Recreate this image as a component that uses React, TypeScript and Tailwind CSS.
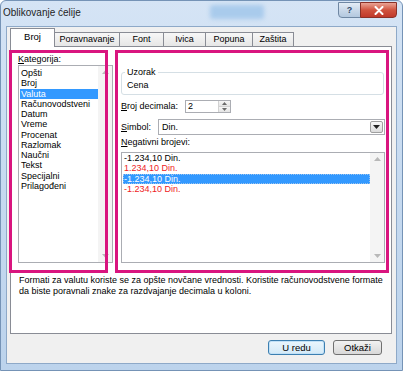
const categories = [
  "Opšti",
  "Broj",
  "Valuta",
  "Računovodstveni",
  "Datum",
  "Vreme",
  "Procenat",
  "Razlomak",
  "Naučni",
  "Tekst",
  "Specijalni",
  "Prilagođeni",
];

const negatives = [
  { text: "-1.234,10 Din.", red: false },
  { text: "1.234,10 Din.", red: true },
  { text: "-1.234,10 Din.", red: false, selected: true },
  { text: "-1.234,10 Din.", red: true },
];

const tabs = ["Broj", "Poravnavanje", "Font", "Ivica", "Popuna", "Zaštita"];
const tabWidths = ["w-[45px]", "w-[66px]", "w-[45px]", "w-[43px]", "w-[48px]", "w-[42px]"];

function Arrow({ up, className }: { up?: boolean; className?: string }) {
  return (
    <svg width="7" height="4" viewBox="0 0 7 4" className={className}>
      <path d={up ? "M0 4 L3.5 0 L7 4 Z" : "M0 0 L3.5 4 L7 0 Z"} fill="currentColor" />
    </svg>
  );
}

function ScrollTrack() {
  return (
    <div className="flex w-[14px] shrink-0 flex-col items-center justify-between bg-[#f4f4f4] py-[4px] text-[#b8b8b8]">
      <Arrow up />
      <Arrow />
    </div>
  );
}

export default function App() {
  return (
    <div className="relative h-[371px] w-[403px] overflow-hidden bg-white font-['Liberation_Sans',Arial,sans-serif] text-[9px] text-black">
      <div className="flex h-full flex-col rounded-t-[6px] border border-[#7593b6] bg-gradient-to-b from-[#d5e4f5] via-[#c6daf0] to-[#bcd3ec]">
        {/* title bar */}
        <div className="relative flex h-[25px] shrink-0 items-start">
          <div className="absolute top-[4px] left-[209px] h-[14px] w-[54px] rounded-[3px] bg-[#a9cbec] blur-[2px]" />
          <span className="relative mt-[5px] ml-[2px] text-[10px] leading-[14px] text-[#1e1e1e]">
            Oblikovanje ćelije
          </span>
          <div className="relative mt-[1px] mr-[5px] ml-auto flex">
            <div className="flex h-[16px] w-[23px] items-center justify-center rounded-bl-[4px] border border-[#6f87a3] bg-gradient-to-b from-[#e3ecf6] via-[#c9d8e9] to-[#b3c8df] text-[9px] leading-none font-bold text-[#2f4a69]">
              ?
            </div>
            <div className="-ml-px flex h-[16px] w-[37px] items-center justify-center rounded-br-[4px] border border-[#8b3128] bg-gradient-to-b from-[#e9a395] via-[#d0533f] to-[#c0392b]">
              <svg width="10" height="9" viewBox="0 0 10 9">
                <path d="M1.5 1 L8.5 8 M8.5 1 L1.5 8" stroke="#fff" strokeWidth="2" strokeLinecap="round" />
              </svg>
            </div>
          </div>
        </div>

        {/* client area */}
        <div className="mx-[5px] mb-[6px] flex flex-1 flex-col border border-[#8ea9c8] bg-[#f0f0f0] pr-[4px] pl-[3px]">
          {/* tabs */}
          <div className="flex h-[19px] items-end">
            {tabs.map((tab, i) =>
              i === 0 ? (
                <div
                  key={tab}
                  className={`relative z-10 -mb-px flex h-[19px] ${tabWidths[i]} items-center justify-center border-x border-t border-[#898c95] bg-white pb-[2px] text-[9.5px]`}
                >
                  {tab}
                </div>
              ) : (
                <div
                  key={tab}
                  className={`-ml-px flex h-[14px] ${tabWidths[i]} items-center justify-center border-x border-t border-[#898c95] bg-gradient-to-b from-[#f7f7f7] to-[#e6e6e6] text-[9px]`}
                >
                  {tab}
                </div>
              ),
            )}
          </div>

          {/* tab panel */}
          <div className="flex h-[288px] w-[382px] flex-col border border-[#898c95] bg-white pt-[7px] pl-[7px]">
            <div className="flex gap-[8px]">
              {/* left column */}
              <div className="flex w-[95px] flex-col">
                <div className="h-[11px] leading-[11px]">
                  <span className="underline">K</span>ategorija:
                </div>
                <div className="flex h-[198px] border border-[#abadb3] bg-white">
                  <div className="flex-1 pt-[2px]">
                    {categories.map((c) => (
                      <div
                        key={c}
                        className={`ml-px h-[10.27px] pl-[1px] leading-[10.27px] ${
                          c === "Valuta" ? "bg-[#3399ff] text-white" : ""
                        }`}
                      >
                        {c}
                      </div>
                    ))}
                  </div>
                  <ScrollTrack />
                </div>
              </div>

              {/* right column */}
              <div className="flex w-[264px] flex-col">
                <div className="relative mt-[18px] mr-[1px] h-[23px] rounded-[3px] border border-[#d5dfe5] pt-[7px] pl-[5px] leading-[11px]">
                  <span className="absolute -top-[6px] left-[3px] bg-white px-[2px] leading-[11px]">
                    Uzorak
                  </span>
                  Cena
                </div>

                <div className="mt-[5px] flex items-center">
                  <span className="w-[64px] leading-[11px]">
                    <span className="underline">B</span>roj decimala:
                  </span>
                  <div className="flex h-[13px] w-[46px] border border-[#abadb3] bg-white">
                    <span className="flex-1 pl-[2px] leading-[11px]">2</span>
                    <div className="flex w-[12px] flex-col border-l border-[#d2d2d2]">
                      <div className="flex flex-1 items-center justify-center bg-gradient-to-b from-[#f6f6f6] to-[#e4e4e4] text-[#6a6a6a]">
                        <svg width="5" height="3" viewBox="0 0 5 3">
                          <path d="M0 3 L2.5 0 L5 3 Z" fill="currentColor" />
                        </svg>
                      </div>
                      <div className="flex flex-1 items-center justify-center border-t border-[#d2d2d2] bg-gradient-to-b from-[#f6f6f6] to-[#e4e4e4] text-[#6a6a6a]">
                        <svg width="5" height="3" viewBox="0 0 5 3">
                          <path d="M0 0 L2.5 3 L5 0 Z" fill="currentColor" />
                        </svg>
                      </div>
                    </div>
                  </div>
                </div>

                <div className="mt-[6px] flex items-center">
                  <span className="w-[37px] leading-[11px]">
                    <span className="underline">S</span>imbol:
                  </span>
                  <div className="flex h-[16px] w-[227px] items-center border border-[#abadb3] bg-white">
                    <span className="flex-1 pl-[3px] leading-[11px]">Din.</span>
                    <div className="mr-px flex h-[12px] w-[13px] items-center justify-center rounded-[2px] border border-[#a0a0a0] bg-gradient-to-b from-[#f8f8f8] to-[#dcdcdc] text-[#222]">
                      <svg width="7" height="4" viewBox="0 0 7 4">
                        <path d="M0 0 L3.5 4 L7 0 Z" fill="currentColor" />
                      </svg>
                    </div>
                  </div>
                </div>

                <div className="mt-[2px] h-[11px] leading-[11px]">
                  <span className="underline">N</span>egativni brojevi:
                </div>
                <div className="mt-[4px] flex h-[111px] border border-[#abadb3] bg-white">
                  <div className="flex-1">
                    {negatives.map((n, i) => (
                      <div
                        key={i}
                        className={`ml-px h-[10.3px] pl-[1px] leading-[10.3px] ${
                          n.selected
                            ? "outline outline-1 -outline-offset-1 outline-dotted outline-[#9ac3ee] bg-[#3399ff] text-white"
                            : n.red
                              ? "text-[#ee1c25]"
                              : ""
                        }`}
                      >
                        {n.text}
                      </div>
                    ))}
                  </div>
                  <ScrollTrack />
                </div>
              </div>
            </div>

            <p className="mt-[12px] pl-[1px] text-[9px] leading-[11px] whitespace-nowrap">
              Formati za valutu koriste se za opšte novčane vrednosti. Koristite računovodstvene formate
              <br />
              da biste poravnali znake za razdvajanje decimala u koloni.
            </p>
          </div>

          {/* buttons */}
          <div className="mt-[6px] mr-[10px] flex justify-end gap-[8px]">
            <button className="h-[15px] w-[57px] rounded-[3px] border border-[#3c7fb1] bg-gradient-to-b from-[#eaf6fd] to-[#d3e9f7] text-[9.5px] leading-none shadow-[inset_0_0_0_1px_#c1e1f7]">
              U redu
            </button>
            <button className="h-[15px] w-[49px] rounded-[3px] border border-[#707070] bg-gradient-to-b from-[#f2f2f2] to-[#d8d8d8] text-[9.5px] leading-none">
              Otkaži
            </button>
          </div>
        </div>
      </div>

      {/* annotation frames */}
      <div className="pointer-events-none absolute top-[50px] left-[9px] h-[223px] w-[99px] border-[3px] border-[#d9157f]" />
      <div className="pointer-events-none absolute top-[50px] left-[115px] h-[223px] w-[274px] border-[3px] border-[#d9157f]" />
    </div>
  );
}
